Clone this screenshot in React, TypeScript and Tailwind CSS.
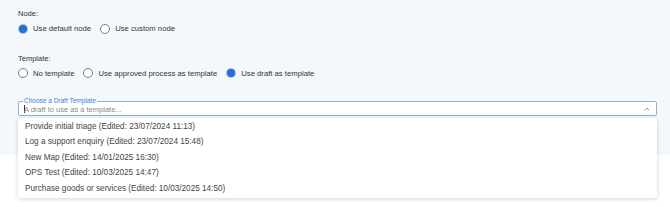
import React from "react";

function Radio({ checked }: { checked?: boolean }) {
  return checked ? (
    <span className="flex h-[10px] w-[10px] shrink-0 items-center justify-center rounded-full bg-[#9fc1ee]">
      <span className="h-[8px] w-[8px] rounded-full bg-[#2a6fd0]" />
    </span>
  ) : (
    <span className="h-[10px] w-[10px] shrink-0 rounded-full border border-[#7c7c7c] bg-white" />
  );
}

function Option({ checked, label }: { checked?: boolean; label: string }) {
  return (
    <div className="flex items-center gap-[5px]">
      <Radio checked={checked} />
      <span className="text-[7.7px] text-[#333]">{label}</span>
    </div>
  );
}

const items = [
  "Provide initial triage (Edited: 23/07/2024 11:13)",
  "Log a support enquiry (Edited: 23/07/2024 15:48)",
  "New Map (Edited: 14/01/2025 16:30)",
  "OPS Test (Edited: 10/03/2025 14:47)",
  "Purchase goods or services (Edited: 10/03/2025 14:50)",
];

export default function App() {
  return (
    <div
      className="relative h-[207px] w-[670px] overflow-hidden bg-white"
      style={{ fontFamily: '"Liberation Sans", Arial, sans-serif' }}
    >
      <div className="flex h-[155px] flex-col bg-[#f5f8fb] px-[18px] pt-[9px]">
        <div className="text-[7.5px] leading-[10px] text-[#333]">Node:</div>
        <div className="mt-[4px] flex items-center gap-[9px]">
          <Option checked label="Use default node" />
          <Option label="Use custom node" />
        </div>
        <div className="mt-[19px] text-[7.5px] leading-[10px] text-[#333]">Template:</div>
        <div className="mt-[4px] flex items-center gap-[9px]">
          <Option label="No template" />
          <Option label="Use approved process as template" />
          <Option checked label="Use draft as template" />
        </div>
        <div className="relative mt-[22px] flex h-[15px] w-[639px] items-center rounded-[2px] border border-[#8fb0d6] bg-white pl-[5px] pr-[6px]">
          <span className="absolute -top-[5px] left-[4px] bg-[linear-gradient(to_bottom,#f5f8fb_50%,#ffffff_50%)] px-[1px] text-[6.5px] leading-[8px] text-[#3b82d6]">
            Choose a Draft Template
          </span>
          <span className="mt-[1px] h-[8px] w-[1px] bg-[#333]" />
          <span className="ml-[-1px] mt-[1px] flex-1 text-[7.5px] leading-[9px] text-[#8a8a8a]">A draft to use as a template...</span>
          <svg width="6" height="4" viewBox="0 0 6 4" className="shrink-0">
            <path d="M0.8 3.3 L3 1 L5.2 3.3" fill="none" stroke="#888" strokeWidth="0.9" />
          </svg>
        </div>
      </div>
      <div className="absolute left-[18px] top-[118px] flex h-[80px] w-[639px] flex-col rounded-[3px] bg-white pt-[1px] shadow-[0_1px_4px_rgba(0,0,0,0.18)]">
        {items.map((t) => (
          <div key={t} className="flex h-[15.5px] items-center pl-[7px] text-[8.2px] text-[#444]">
            {t}
          </div>
        ))}
      </div>
    </div>
  );
}
